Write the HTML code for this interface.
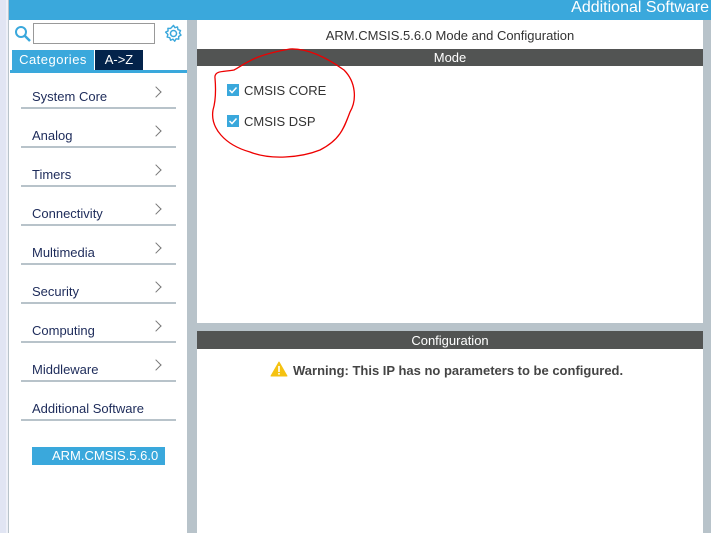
<!DOCTYPE html><html><head><style>
body{margin:0;width:711px;height:533px;overflow:hidden;background:#b8c3ca;font-family:"Liberation Sans",sans-serif;position:relative}
div{position:absolute;box-sizing:border-box}
.it{left:21px;width:155px;height:39px;border-bottom:2px solid #b8c3ca;color:#1d2b5a;font-size:13px}
.it span{position:absolute;left:11px;bottom:3px}
.it i{position:absolute;right:16px;bottom:11px;width:7px;height:7px;border-right:1px solid #777;border-top:1px solid #777;transform:rotate(45deg)}
</style></head><body>
<div style="left:0;top:0;width:8px;height:533px;background:#e1e5f3;border-right:2px solid #eef0f8"></div>
<div style="left:9px;top:0;width:702px;height:20px;background:#3aa8dc;color:#fff;font-size:16px;text-align:right;padding-right:2px;line-height:16px">Additional Software</div>
<div style="left:9px;top:20px;width:178px;height:513px;background:#fff"></div>
<svg style="position:absolute;left:14px;top:25px" width="18" height="18"><circle cx="7" cy="7" r="5" fill="none" stroke="#3aa8dc" stroke-width="2"/><line x1="11" y1="11" x2="16" y2="16" stroke="#3aa8dc" stroke-width="2.5"/></svg>
<div style="left:33px;top:23px;width:122px;height:21px;border:1px solid #999"></div>
<svg style="position:absolute;left:164px;top:24px" width="19" height="19" viewBox="0 0 20 20"><circle cx="10" cy="10" r="3.2" fill="none" stroke="#3aa8dc" stroke-width="1.6"/><path d="M10 1.5l1.5 2.4 2.7-.8.5 2.8 2.7 1-1.2 2.6 1.7 2.2-2.5 1.4.1 2.8-2.8-.3-1.4 2.5-1.8-2.1-2.6 1.1-.8-2.7-2.8-.6.8-2.7L1.7 8.6l2.6-1.3-.2-2.8 2.8.2z" fill="none" stroke="#3aa8dc" stroke-width="1.5" stroke-linejoin="round"/></svg>
<div style="left:12px;top:50px;width:82px;height:20px;background:#3aa8dc;color:#fff;font-size:13px;text-align:center;line-height:20px;letter-spacing:.5px">Categories</div>
<div style="left:95px;top:50px;width:48px;height:20px;background:#03234b;color:#fff;font-size:13px;text-align:center;line-height:20px">A-&gt;Z</div>
<div style="left:10px;top:70px;width:177px;height:3px;background:#3aa8dc"></div>
<div class="it" style="top:70px"><span>System Core</span><i></i></div>
<div class="it" style="top:109px"><span>Analog</span><i></i></div>
<div class="it" style="top:148px"><span>Timers</span><i></i></div>
<div class="it" style="top:187px"><span>Connectivity</span><i></i></div>
<div class="it" style="top:226px"><span>Multimedia</span><i></i></div>
<div class="it" style="top:265px"><span>Security</span><i></i></div>
<div class="it" style="top:304px"><span>Computing</span><i></i></div>
<div class="it" style="top:343px"><span>Middleware</span><i></i></div>
<div class="it" style="top:382px"><span>Additional Software</span></div>
<div style="left:32px;top:447px;width:133px;height:18px;background:#3aa8dc;color:#fff;font-size:13px;line-height:18px;padding-left:20px">ARM.CMSIS.5.6.0</div>
<div style="left:197px;top:20px;width:506px;height:303px;background:#fff"></div>
<div style="left:197px;top:28px;width:506px;text-align:center;font-size:13px;color:#333">ARM.CMSIS.5.6.0 Mode and Configuration</div>
<div style="left:197px;top:49px;width:506px;height:17px;background:#525453;color:#fff;font-size:13px;text-align:center;line-height:18px">Mode</div>
<div style="left:227px;top:84px;width:12px;height:12px;background:#3aa8dc"></div>
<div style="left:227px;top:115px;width:12px;height:12px;background:#3aa8dc"></div>
<svg style="position:absolute;left:227px;top:84px" width="12" height="44"><path d="M2.5 6l2.5 2.5 4.5-5M2.5 37l2.5 2.5 4.5-5" fill="none" stroke="#fff" stroke-width="1.5"/></svg>
<div style="left:244px;top:83px;font-size:13px;color:#333">CMSIS CORE</div>
<div style="left:244px;top:114px;font-size:13px;color:#333">CMSIS DSP</div>
<svg style="position:absolute;left:0;top:0" width="711" height="533"><path d="M215 78 C214 70 225 72 234 70 C248 62 255 55 290 49 C310 48 330 60 344 70 C356 82 357 100 350 112 C344 128 340 140 320 150 C300 158 270 160 250 152 C225 145 210 128 213 110 C216 100 216 90 215 78" fill="none" stroke="#e00" stroke-width="1.3"/></svg>
<div style="left:197px;top:331px;width:506px;height:202px;background:#fff"></div>
<div style="left:197px;top:331px;width:506px;height:18px;background:#525453;color:#fff;font-size:13px;text-align:center;line-height:19px">Configuration</div>
<svg style="position:absolute;left:270px;top:361px" width="18" height="16"><path d="M9 1L17 15H1z" fill="#f5c211" stroke="#f5c211" stroke-linejoin="round"/><rect x="8.2" y="5" width="1.6" height="6" fill="#fff"/><rect x="8.2" y="12" width="1.6" height="1.6" fill="#fff"/></svg>
<div style="left:293px;top:363px;font-size:13px;font-weight:bold;color:#444">Warning: This IP has no parameters to be configured.</div>
</body></html>
